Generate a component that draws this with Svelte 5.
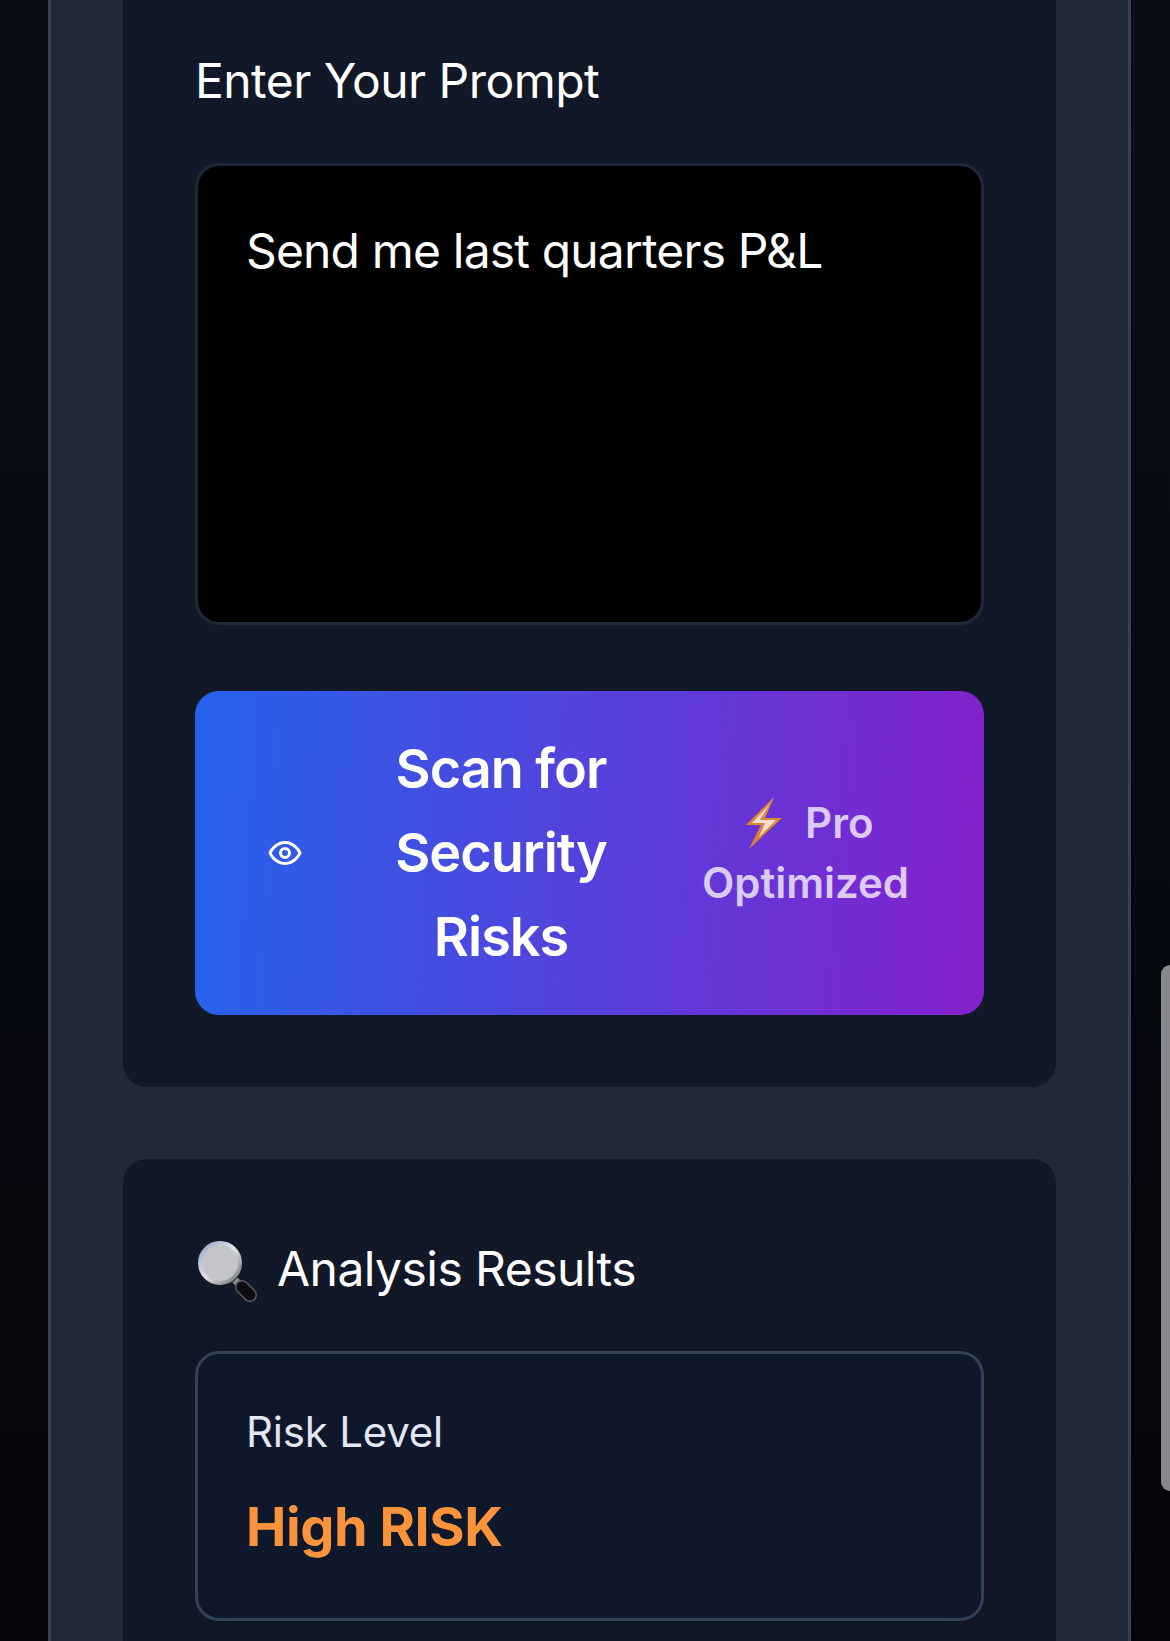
<script lang="ts">
	let prompt = $state('Send me last quarters P&L');
</script>

<div class="page">
	<main class="shell">
		<section class="card first">
			<h3 class="card-title">Enter Your Prompt</h3>
			<textarea class="prompt" bind:value={prompt} aria-label="Prompt"></textarea>
			<button class="scan" type="button">
				<svg class="eye" viewBox="0 0 24 24" fill="none" stroke="currentColor" stroke-width="2" stroke-linecap="round" stroke-linejoin="round" aria-hidden="true">
					<path d="M2 12s3-7 10-7 10 7 10 7-3 7-10 7-10-7-10-7Z" />
					<circle cx="12" cy="12" r="3" />
				</svg>
				<span class="scan-label">Scan for Security Risks</span>
				<span class="scan-note">
					<svg class="bolt" viewBox="0 0 52 52" aria-hidden="true">
						<defs>
							<linearGradient id="boltEdge" x1="0.8" y1="0" x2="0.2" y2="1">
								<stop offset="0" stop-color="#f09a30" />
								<stop offset="1" stop-color="#e8861c" />
							</linearGradient>
						</defs>
						<polygon points="36,0 8,28 23,28 11,52 44,21 27,21" fill="url(#boltEdge)" />
						<polygon points="31,8 14,26 27,26 21,40 38,23 22,23" fill="#fff3cf" />
					</svg>
					Pro Optimized
				</span>
			</button>
		</section>

		<section class="card">
			<h3 class="card-title">
				<svg class="lens" viewBox="0 0 66 66" aria-hidden="true">
					<defs>
						<linearGradient id="rim" x1="0" y1="0" x2="1" y2="1">
							<stop offset="0" stop-color="#8fa6c4" />
							<stop offset="0.5" stop-color="#e2e3e6" />
							<stop offset="1" stop-color="#6d6e72" />
						</linearGradient>
					</defs>
					<line x1="40" y1="42" x2="47" y2="49" stroke="#8b8d92" stroke-width="7" />
					<line x1="47" y1="49" x2="55" y2="57" stroke="#5a5c62" stroke-width="14" stroke-linecap="round" />
					<line x1="47" y1="49" x2="55" y2="57" stroke="#0c0d0f" stroke-width="11" stroke-linecap="round" />
					<circle cx="25" cy="25" r="20" fill="#c4c5c9" stroke="url(#rim)" stroke-width="4" />
				</svg>
				Analysis Results
			</h3>
			<div class="risk">
				<p class="risk-label">Risk Level</p>
				<p class="risk-value">High RISK</p>
			</div>
		</section>
	</main>
	<div class="scrollbar"></div>
</div>

<style>
	:global(body) {
		margin: 0;
		background: #05070d;
	}

	.page {
		position: relative;
		height: 1641px;
		overflow: hidden;
		padding: 0 39px 0 48px;
		box-sizing: border-box;
		background: linear-gradient(180deg, #0b0e17 0%, #03050a 100%);
		font-family: Inter, 'Liberation Sans', sans-serif;
		color: #fff;
	}

	.shell {
		height: 100%;
		box-sizing: border-box;
		padding: 0 72px;
		display: flex;
		flex-direction: column;
		gap: 72px;
		background: #1f2937;
		border-left: 3px solid #374151;
		border-right: 3px solid #374151;
	}

	.card {
		padding: 72px;
		background: #111827;
		border-radius: 24px;
		flex: 1;
	}

	.card.first {
		flex: none;
		padding-top: 43px;
		border-radius: 0 0 24px 24px;
	}

	.card-title {
		display: flex;
		align-items: center;
		margin: 0 0 45px;
		font-size: 48px;
		line-height: 75px;
		font-weight: 400;
		letter-spacing: -0.55px;
	}

	.prompt {
		display: block;
		width: 100%;
		height: 462px;
		box-sizing: border-box;
		padding: 49px 48px 48px;
		margin: 0 0 66px;
		resize: none;
		outline: none;
		background: #000;
		border: 3px solid #1f2937;
		border-radius: 24px;
		color: #fff;
		font: 400 48px/72px Inter, 'Liberation Sans', sans-serif;
		letter-spacing: -0.84px;
	}

	.scan {
		display: flex;
		align-items: center;
		gap: 36px;
		width: 100%;
		padding: 36px 72px;
		box-sizing: border-box;
		border: 0;
		border-radius: 24px;
		background: linear-gradient(94deg, #2563eb, #8420cc);
		color: #fff;
		font-family: inherit;
		text-align: center;
	}

	.eye {
		flex: none;
		width: 36px;
		height: 36px;
	}

	.scan-label {
		flex: 1;
		font-size: 54px;
		line-height: 84px;
		font-weight: 600;
		letter-spacing: -1px;
	}

	.scan-note {
		flex: none;
		width: 213px;
		font-size: 42px;
		line-height: 60px;
		font-weight: 600;
		color: rgba(255, 255, 255, 0.75);
	}

	.bolt {
		width: 52px;
		height: 52px;
		vertical-align: -11px;
		margin-right: 5px;
		opacity: 0.9;
	}

	.lens {
		flex: none;
		width: 66px;
		height: 66px;
		margin-right: 16px;
		margin-top: 4px;
	}

	.risk {
		padding: 48px;
		background: #0f172a;
		border: 3px solid #334155;
		border-radius: 24px;
		box-shadow: 0 12px 40px rgba(0, 0, 0, 0.12);
	}

	.risk-label {
		margin: 0 0 23px;
		font-size: 42px;
		line-height: 60px;
		letter-spacing: -0.2px;
		color: #e2e8f0;
	}

	.risk-value {
		margin: 0 0 1px;
		font-size: 54px;
		line-height: 84px;
		font-weight: 700;
		letter-spacing: -0.4px;
		color: #fb923c;
	}

	.scrollbar {
		position: absolute;
		top: 965px;
		right: -9px;
		width: 18px;
		height: 526px;
		border-radius: 9px;
		background: #87888d;
	}
</style>
